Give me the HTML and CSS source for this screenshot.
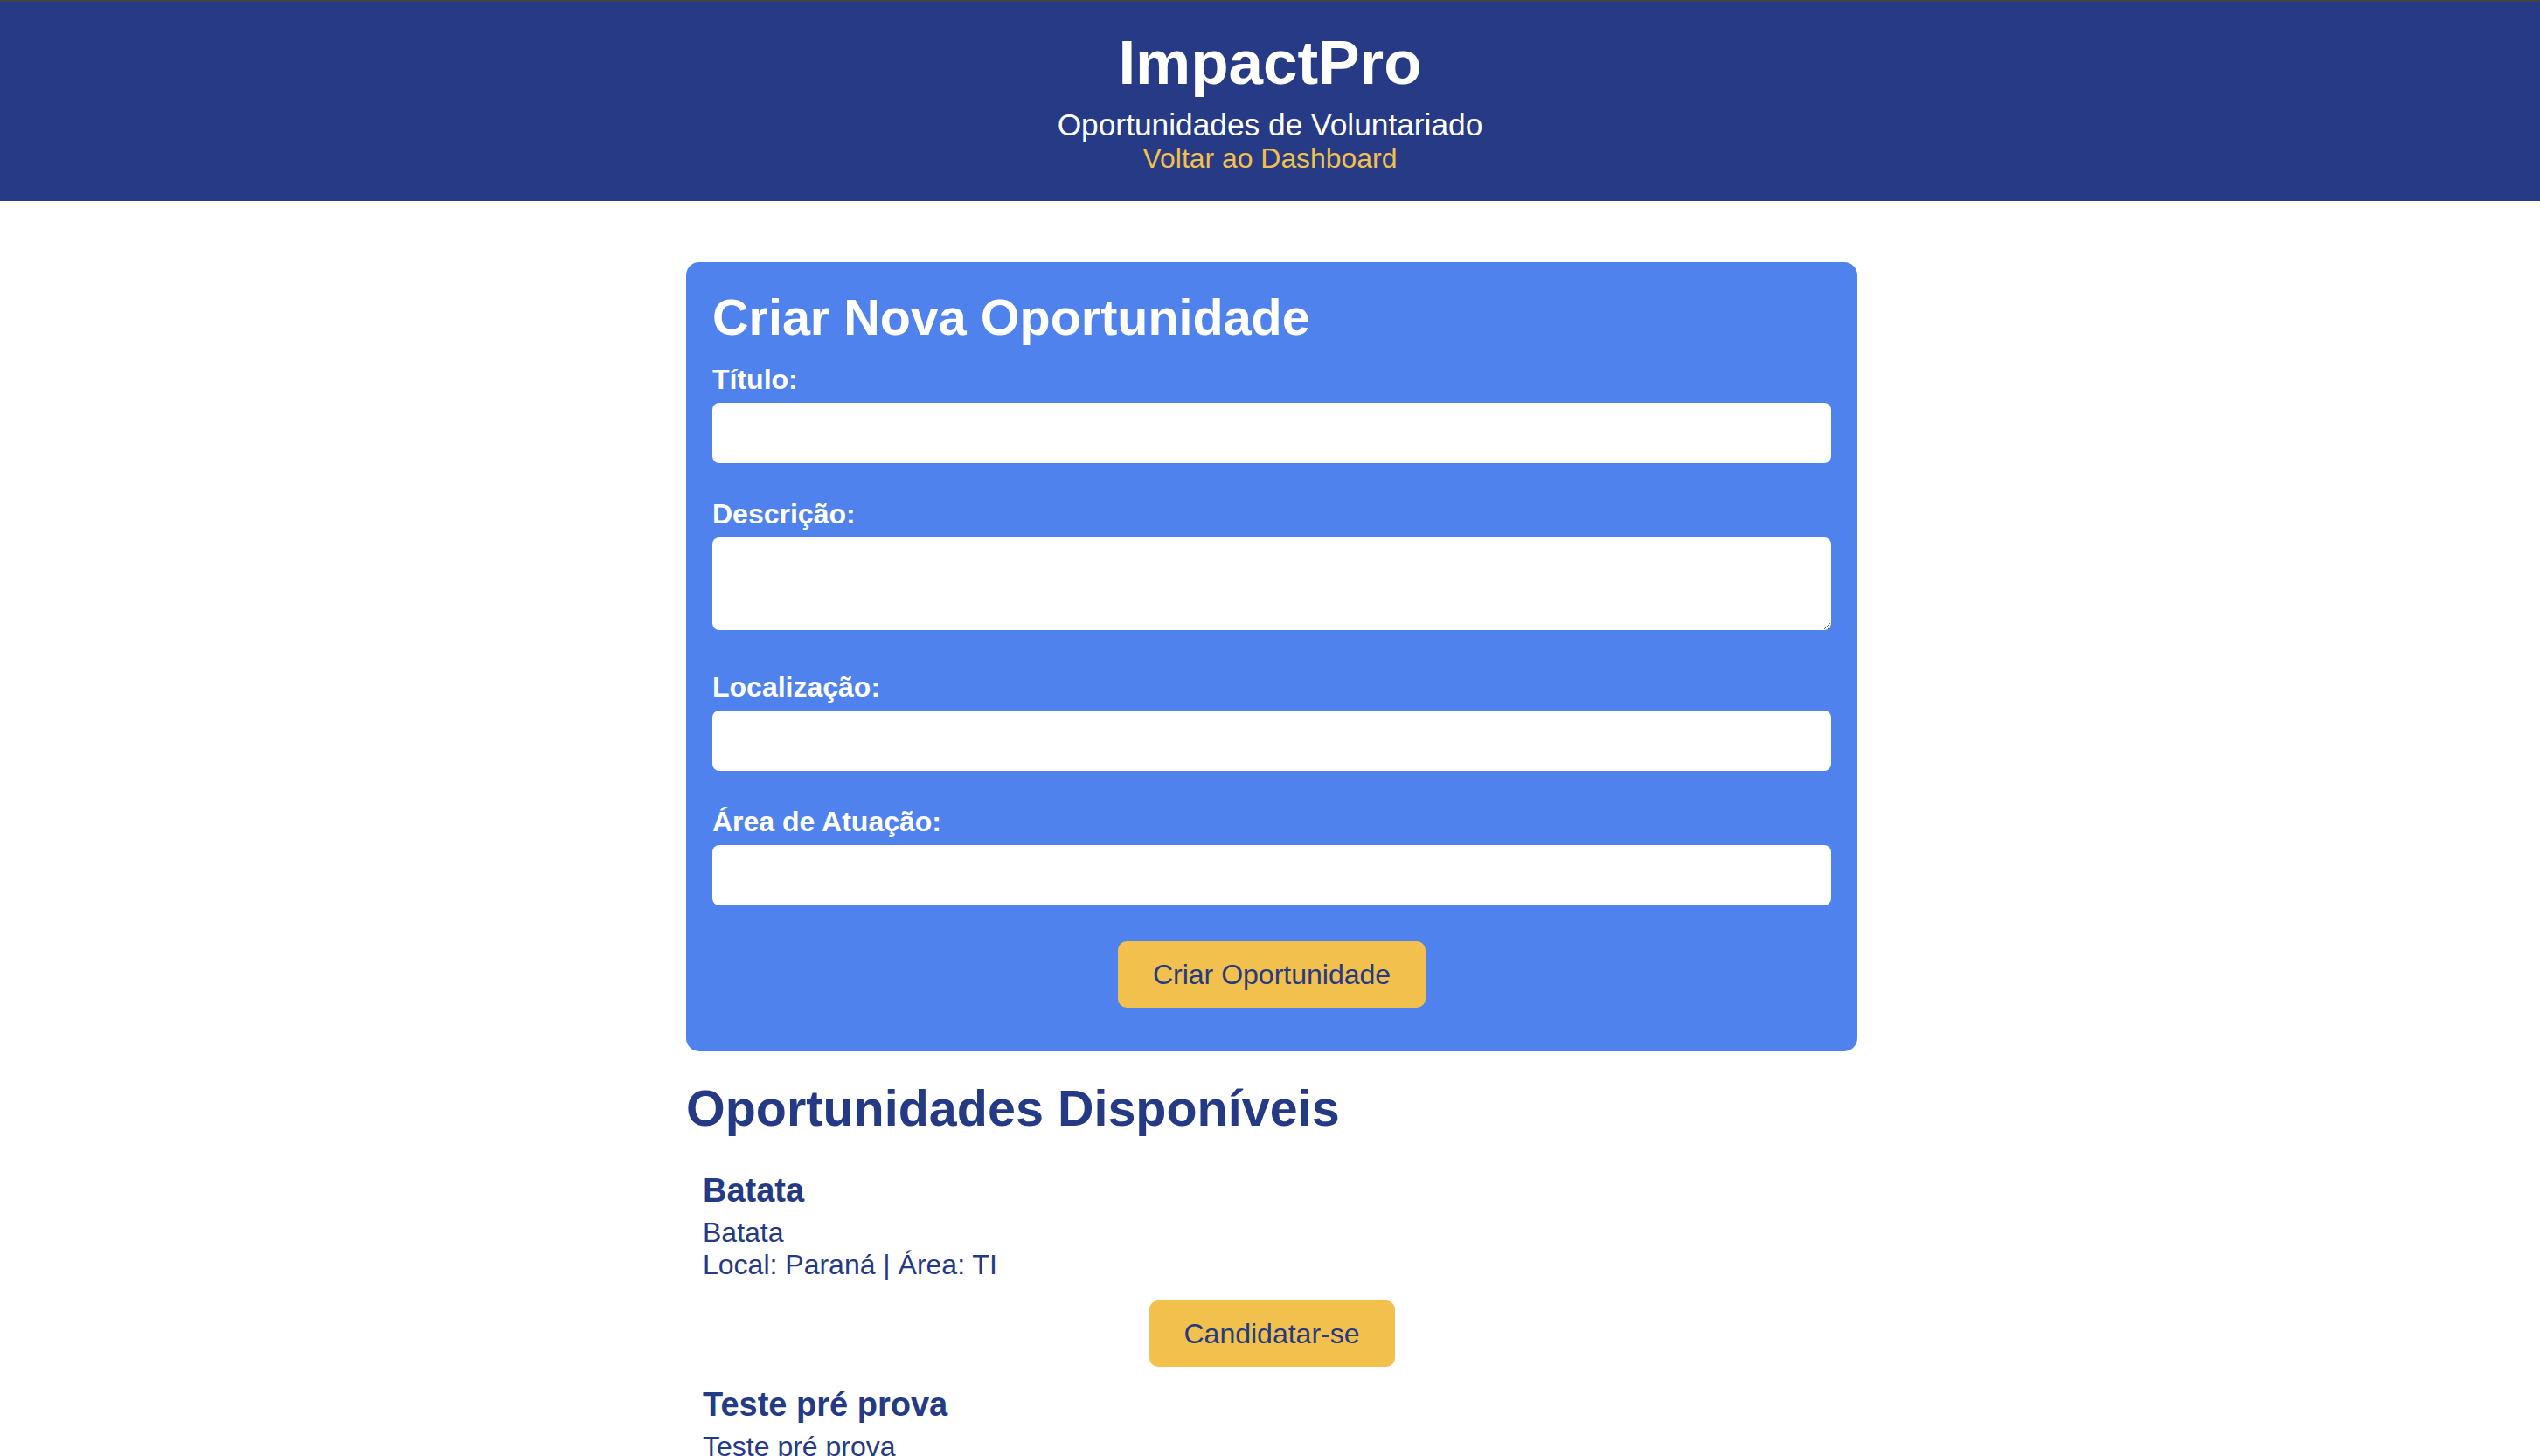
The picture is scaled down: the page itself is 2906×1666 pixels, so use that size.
FILE: index.html
```html
<!DOCTYPE html>
<html lang="pt-BR">
<head>
<meta charset="utf-8">
<title>ImpactPro - Oportunidades de Voluntariado</title>
<link rel="stylesheet" href="styles.css">
</head>
<body>
<header class="site-header">
  <h1 class="brand">ImpactPro</h1>
  <p class="subtitle">Oportunidades de Voluntariado</p>
  <a class="back-link" href="#">Voltar ao Dashboard</a>
</header>
<div class="page">
<main class="container">
  <section class="create-card">
    <h2 class="card-title">Criar Nova Oportunidade</h2>
    <form class="create-form">
      <label class="field-label" for="titulo">Título:</label>
      <input class="field-input" id="titulo" type="text">
      <label class="field-label" for="descricao">Descrição:</label>
      <textarea class="field-textarea" id="descricao"></textarea>
      <label class="field-label" for="local">Localização:</label>
      <input class="field-input" id="local" type="text">
      <label class="field-label" for="area">Área de Atuação:</label>
      <input class="field-input" id="area" type="text">
      <div class="form-actions">
        <button class="btn" type="button">Criar Oportunidade</button>
      </div>
    </form>
  </section>
  <section class="list-section">
    <h2 class="list-title">Oportunidades Disponíveis</h2>
    <div class="opportunity">
      <h3 class="op-title">Batata</h3>
      <p class="op-desc">Batata<br>Local: Paraná | Área: TI</p>
      <div class="op-actions"><button class="btn" type="button">Candidatar-se</button></div>
    </div>
    <div class="opportunity">
      <h3 class="op-title">Teste pré prova</h3>
      <p class="op-desc">Teste pré prova<br>Local: Curitiba | Área: Educação</p>
      <div class="op-actions"><button class="btn" type="button">Candidatar-se</button></div>
    </div>
  </section>
</main>
</div>
</body>
</html>
```
FILE: styles.css
```css
* { box-sizing: border-box; }

html, body {
  margin: 0;
  padding: 0;
  background: #ffffff;
  font-family: "Liberation Sans", Arial, Helvetica, sans-serif;
  color: #253a85;
}

.site-header {
  background: #263a86;
  border-top: 2px solid #444444;
  padding: 30px 0 31px;
  display: flex;
  flex-direction: column;
  align-items: center;
  color: #ffffff;
}

.brand {
  margin: 0;
  font-size: 71px;
  line-height: 80px;
  font-weight: bold;
}

.subtitle {
  margin: 11px 0 0;
  font-size: 35.3px;
  line-height: 40px;
}

.back-link {
  font-size: 31.9px;
  line-height: 36px;
  color: #f2c04c;
  text-decoration: none;
}

.page {
  padding-left: 4px;
}

.container {
  width: 1340px;
  margin: 70px auto 0;
  display: flex;
  flex-direction: column;
}

.create-card {
  background: #4f82ed;
  border-radius: 15px;
  padding: 30px 30px 50px;
  color: #ffffff;
}

.card-title {
  margin: 0 0 20px;
  font-size: 57.5px;
  line-height: 66px;
  font-weight: bold;
}

.create-form {
  display: flex;
  flex-direction: column;
}

.field-label {
  font-size: 32px;
  line-height: 37px;
  font-weight: bold;
  margin-bottom: 8px;
}

.field-input,
.field-textarea {
  display: block;
  width: 100%;
  border: none;
  border-radius: 8px;
  background: #ffffff;
  font-family: inherit;
  font-size: 32px;
  padding: 10px 16px;
  margin: 0 0 40px;
}

.field-input { height: 69px; }

.field-textarea {
  height: 106px;
  resize: vertical;
  margin-bottom: 47px;
}

.form-actions {
  display: flex;
  justify-content: center;
  margin-top: 1px;
}

.btn {
  background: #f2c04c;
  color: #253a85;
  border: none;
  border-radius: 10px;
  font-family: inherit;
  font-size: 32px;
  line-height: 36px;
  height: 76px;
  padding: 0 40px;
  cursor: pointer;
}

.list-title {
  margin: 32px 0 39px;
  font-size: 57.5px;
  line-height: 66px;
  font-weight: bold;
  color: #253a85;
}

.opportunity {
  padding: 0 19px 21px;
  display: flex;
  flex-direction: column;
}

.op-title {
  margin: 0 0 8px;
  font-size: 38px;
  line-height: 44px;
  font-weight: bold;
}

.op-desc {
  margin: 0;
  font-size: 32px;
  line-height: 37px;
}

.op-actions {
  display: flex;
  justify-content: center;
  margin-top: 22px;
}
```
